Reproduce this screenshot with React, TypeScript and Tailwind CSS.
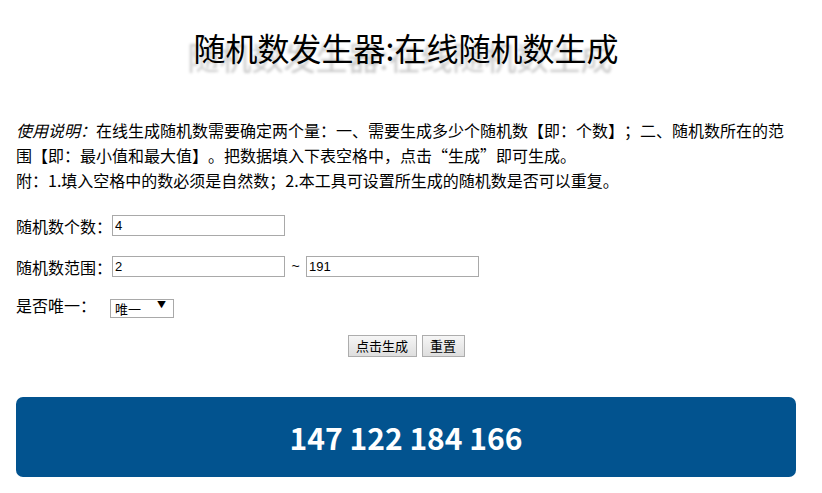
import { useState } from "react";

const font = "font-['Microsoft_YaHei','Noto_Sans_CJK_SC',sans-serif] [text-spacing-trim:space-all]";

export default function App() {
  const [count, setCount] = useState("4");
  const [min, setMin] = useState("2");
  const [max, setMax] = useState("191");
  const [unique, setUnique] = useState("1");

  return (
    <div className={`h-[493px] overflow-hidden bg-white text-black ${font}`}>
      <div className="ml-[16px] w-[780px]">
        <h1 className="mt-[27px] h-[40px] text-center text-[32px] leading-[40px] font-normal [text-shadow:-6px_9px_3px_#c8c8c8]">
          随机数发生器:在线随机数生成
        </h1>

        <p className="mt-[51px] text-[16px] leading-[25px]">
          <i>使用说明：</i>在线生成随机数需要确定两个量：一、需要生成多少个随机数【即：个数】；二、随机数所在的范围【即：最小值和最大值】。把数据填入下表空格中，点击“生成”即可生成。
          <br />
          附：1.填入空格中的数必须是自然数；2.本工具可设置所生成的随机数是否可以重复。
        </p>

        <div className="mt-[22px] flex h-[21px] items-center text-[16px]">
          <span className="w-[96px]">随机数个数：</span>
          <input
            value={count}
            onChange={(e) => setCount(e.target.value)}
            className="h-[21px] w-[173px] border border-[#a9a9a9] px-[2px] text-[13px] font-['Liberation_Sans',sans-serif] outline-none"
          />
        </div>

        <div className="mt-[20px] flex h-[21px] items-center text-[16px]">
          <span className="w-[96px]">随机数范围：</span>
          <input
            value={min}
            onChange={(e) => setMin(e.target.value)}
            className="h-[21px] w-[173px] border border-[#a9a9a9] px-[2px] text-[13px] font-['Liberation_Sans',sans-serif] outline-none"
          />
          <span className="mx-[6px] w-[9px] text-center font-['Liberation_Sans',sans-serif] text-[14px]">~</span>
          <input
            value={max}
            onChange={(e) => setMax(e.target.value)}
            className="h-[21px] w-[173px] border border-[#a9a9a9] px-[2px] text-[13px] font-['Liberation_Sans',sans-serif] outline-none"
          />
        </div>

        <div className="mt-[18px] flex h-[19px] items-center text-[16px]">
          <span className="w-[94px]">是否唯一：</span>
          <div className="relative h-[19px] w-[64px]">
            <select
              value={unique}
              onChange={(e) => setUnique(e.target.value)}
              className="h-[19px] w-[64px] appearance-none border border-[#a9a9a9] bg-white pl-[4px] text-[13px] leading-[17px] outline-none"
            >
              <option value="1">唯一</option>
              <option value="0">可重复</option>
            </select>
            <span className="pointer-events-none absolute right-[8px] top-[4px] text-[9px] leading-[12px]">▼</span>
          </div>
        </div>

        <div className="mt-[21px] flex h-[22px] justify-center gap-[5px]">
          <button className="h-[22px] w-[69px] border border-[#adadad] bg-gradient-to-b from-[#f6f6f6] to-[#dedede] text-[13px] leading-[20px]">
            点击生成
          </button>
          <button className="h-[22px] w-[43px] border border-[#adadad] bg-gradient-to-b from-[#f6f6f6] to-[#dedede] text-[13px] leading-[20px]">
            重置
          </button>
        </div>

        <div className="mt-[40px] flex h-[80px] items-center justify-center rounded-[7px] bg-[#02538f]">
          <span className="text-[30px] font-bold text-white">147 122 184 166</span>
        </div>
      </div>
    </div>
  );
}
